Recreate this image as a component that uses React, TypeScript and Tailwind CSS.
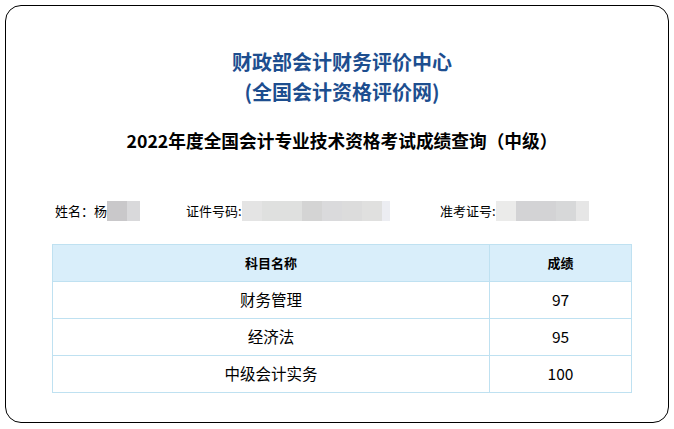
import React from 'react';

const font = { fontFamily: '"Noto Sans CJK SC", "Noto Sans", sans-serif' };

const scores = [
  { name: '财务管理', score: '97' },
  { name: '经济法', score: '95' },
  { name: '中级会计实务', score: '100' },
];

function Blur({ parts }: { parts: [number, string][] }) {
  return (
    <span className="flex h-[20px]">
      {parts.map(([w, c], i) => (
        <span key={i} className="h-full" style={{ width: w, background: c }} />
      ))}
    </span>
  );
}

export default function App() {
  return (
    <div className="h-[429px] w-[674px] bg-white pl-[5px] pt-[5px]" style={font}>
      <div className="h-[418px] w-[664px] rounded-[16px] border border-black pl-[46px] pr-[35px] pt-[41px]">
        <div className="w-[580px] text-center">
          <h1 className="text-[20px] font-bold leading-[30px] text-[#1d4e8f]">财政部会计财务评价中心</h1>
          <h1 className="text-[20px] font-bold leading-[30px] text-[#1d4e8f]">(全国会计资格评价网)</h1>
          <h2 className="mt-[18px] text-[17.7px] font-bold leading-[30px] text-black">
            2022年度全国会计专业技术资格考试成绩查询（中级）
          </h2>
        </div>

        <div className="mt-[46px] flex h-[20px] items-center text-[13px] text-black">
          <div className="flex w-[134px] items-center pl-[3px]">
            <span>姓名：杨</span>
            <Blur parts={[[20, '#c9c8ca'], [13, '#d9d9db']]} />
          </div>
          <div className="flex w-[254px] items-center">
            <span>证件号码:</span>
            <Blur
              parts={[
                [20, '#e4e4e4'],
                [40, '#dfe0df'],
                [20, '#d4d4d4'],
                [20, '#dadadc'],
                [20, '#dcdcdc'],
                [20, '#e0e0df'],
                [8, '#ecedf2'],
              ]}
            />
          </div>
          <div className="flex items-center">
            <span>准考证号:</span>
            <Blur parts={[[20, '#ebebea'], [40, '#d3d3d5'], [20, '#d7d8d9'], [13, '#e6e6e6']]} />
          </div>
        </div>

        <table className="mt-[23px] w-[580px] border-collapse text-black">
          <thead>
            <tr className="h-[37px] bg-[#d9eefa] text-[13px] font-bold">
              <th className="w-[437px] border border-[#bfe1f1] font-bold">科目名称</th>
              <th className="border border-[#bfe1f1] font-bold">成绩</th>
            </tr>
          </thead>
          <tbody>
            {scores.map((s) => (
              <tr key={s.name} className="h-[37px] text-[15.5px]">
                <td className="border border-[#bfe1f1] text-center">{s.name}</td>
                <td className="border border-[#bfe1f1] text-center">{s.score}</td>
              </tr>
            ))}
          </tbody>
        </table>
      </div>
    </div>
  );
}
